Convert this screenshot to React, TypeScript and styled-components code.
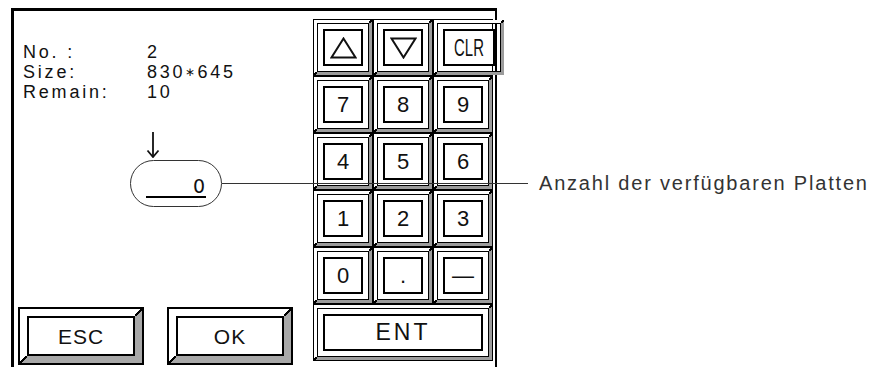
import styled, { createGlobalStyle } from 'styled-components';

const GlobalStyle = createGlobalStyle`
  html, body {
    margin: 0;
    padding: 0;
    background: #ffffff;
  }
  body {
    font-family: "Liberation Sans", Arial, sans-serif;
    color: #111111;
  }
`

const Page = styled.div`
  position: relative;
  width: 880px;
  height: 367px;
  overflow: hidden;
  background: #ffffff;
`

const Frame = styled.div`
  margin: 8px 0 0 11px;
  width: 481px;
  height: 400px;
  border-left: 3px solid #000;
  border-top: 3px solid #000;
  border-right: 2px solid #000;
  display: flex;
`

const LeftCol = styled.div`
  width: 299px;
  display: flex;
  flex-direction: column;
`

const Info = styled.div`
  padding: 31px 0 0 9px;
  display: grid;
  grid-template-columns: 124px auto;
  font-size: 18px;
  line-height: 20px;
  letter-spacing: 2.8px;
  color: #111;
`

const Star = styled.span`
  font-size: 12px;
  vertical-align: 2px;
  letter-spacing: 2px;
`

const ArrowWrap = styled.div`
  margin: 30px 0 0 132px;
  height: 26px;
  svg { display: block; }
`

const Pill = styled.div`
  margin: 2px 0 0 116px;
  width: 92px;
  height: 47px;
  box-sizing: border-box;
  border: 1.5px solid #333;
  border-radius: 24px;
  display: flex;
  align-items: center;
  justify-content: center;
`

const Field = styled.div`
  width: 60px;
  margin-top: 6px;
  border-bottom: 2px solid #000;
  text-align: right;
  font-family: "DejaVu Sans", sans-serif;
  font-size: 19px;
  line-height: 20px;
  padding-right: 1px;
  box-sizing: border-box;
`

const ButtonRow = styled.div`
  margin: 100px 0 0 4px;
  display: flex;
  gap: 23px;
`

const BigButton = styled.div`
  width: 126px;
  height: 58px;
  box-sizing: border-box;
  border: 2px solid #000;
  display: flex;
`

/* corner pieces draw the black diagonal where light and dark bevel meet */
const corners = (w: number) => `
  position: relative;
  &::before, &::after {
    content: '';
    position: absolute;
    width: ${w}px;
    height: ${w}px;
    background: linear-gradient(to top left, transparent calc(50% - 0.8px), #000 calc(50% - 0.8px), #000 calc(50% + 0.8px), transparent calc(50% + 0.8px));
  }
  &::before { top: -${w}px; right: -${w}px; }
  &::after { bottom: -${w}px; left: -${w}px; }
`

const BigBevel = styled.div`
  flex: 1;
  display: flex;
  border: 7px solid;
  border-color: #ffffff #a8a8a8 #a8a8a8 #ffffff;
  ${corners(7)}
`

const Face = styled.div<{ $size?: number; $spacing?: number }>`
  flex: 1;
  border: 2px solid #000;
  background: #fff;
  display: flex;
  align-items: center;
  justify-content: center;
  font-size: ${p => p.$size ?? 22}px;
  letter-spacing: ${p => p.$spacing ?? 0}px;
  line-height: 1;
  color: #111;
`

const RightCol = styled.div`
  padding-top: 8px;
`

const Keypad = styled.div`
  display: grid;
  grid-template-columns: repeat(3, 60px);
  grid-template-rows: repeat(6, 57px);
`

const Key = styled.div<{ $wide?: boolean }>`
  grid-column: ${p => (p.$wide ? 'span 3' : 'auto')};
  border: 1px solid #000;
  display: flex;
`

const Bevel = styled.div`
  flex: 1;
  display: flex;
  border: 3px solid;
  border-color: #ffffff #9c9c9c #9c9c9c #ffffff;
  box-shadow: inset 0 0 0 1px #000;
  padding: 6px;
  ${corners(3)}
`

const Condensed = styled.span`
  display: inline-block;
  font-size: 24px;
  transform: scaleX(0.62);
  letter-spacing: 0;
`

const CalloutLine = styled.div`
  position: absolute;
  left: 222px;
  top: 183px;
  width: 306px;
  border-top: 1px solid #333;
`

const CalloutLabel = styled.div`
  position: absolute;
  left: 539px;
  top: 172px;
  font-size: 20px;
  line-height: 22px;
  letter-spacing: 1.8px;
  color: #333;
  white-space: nowrap;
`

const Triangle = ({ down }: { down?: boolean }) => (
  <svg width="27" height="22" viewBox="0 0 27 22">
    <polygon
      points={down ? '1.5,1.5 25.5,1.5 13.5,20.5' : '13.5,1.5 25.5,20.5 1.5,20.5'}
      fill="none"
      stroke="#111"
      strokeWidth="2"
    />
  </svg>
)

const DownArrow = () => (
  <svg width="14" height="26" viewBox="0 0 14 26">
    <line x1="7" y1="0" x2="7" y2="24.5" stroke="#111" strokeWidth="1.8" />
    <polyline points="1.5,18.5 7,25 12.5,18.5" fill="none" stroke="#111" strokeWidth="1.8" />
  </svg>
)

const keys: React.ReactNode[] = [
  <Triangle />, <Triangle down />, <Condensed>CLR</Condensed>,
  '7', '8', '9',
  '4', '5', '6',
  '1', '2', '3',
  '0', '.', '—',
]

export default function App() {
  return (
    <Page>
      <GlobalStyle />
      <Frame>
        <LeftCol>
          <Info>
            <span>No. :</span><span>2</span>
            <span>Size:</span><span>830<Star>∗</Star>645</span>
            <span>Remain:</span><span>10</span>
          </Info>
          <ArrowWrap><DownArrow /></ArrowWrap>
          <Pill><Field>0</Field></Pill>
          <ButtonRow>
            <BigButton><BigBevel><Face $size={21} $spacing={1}>ESC</Face></BigBevel></BigButton>
            <BigButton><BigBevel><Face $size={21} $spacing={1}>OK</Face></BigBevel></BigButton>
          </ButtonRow>
        </LeftCol>
        <RightCol>
          <Keypad>
            {keys.map((k, i) => (
              <Key key={i}>
                <Bevel><Face $size={22}>{k}</Face></Bevel>
              </Key>
            ))}
            <Key $wide>
              <Bevel><Face $size={23} $spacing={3}>ENT</Face></Bevel>
            </Key>
          </Keypad>
        </RightCol>
      </Frame>
      <CalloutLine />
      <CalloutLabel>Anzahl der verfügbaren Platten</CalloutLabel>
    </Page>
  )
}
